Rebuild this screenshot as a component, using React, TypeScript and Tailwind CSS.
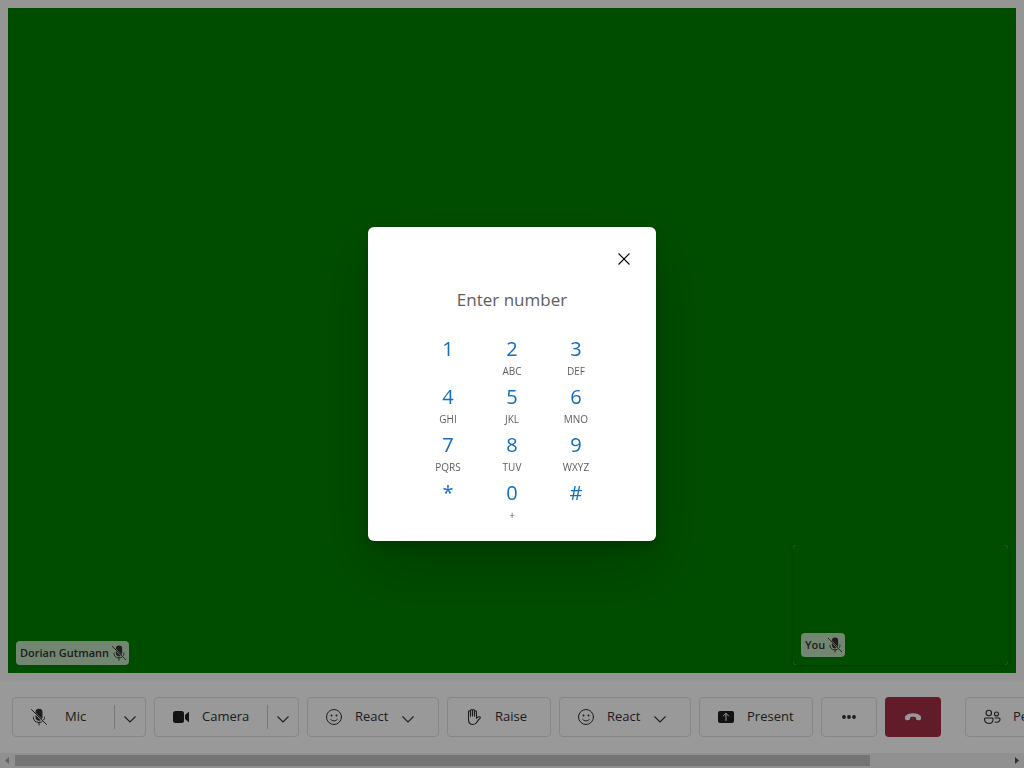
import type { ReactNode } from 'react';

function MicOffIcon({ className }: { className: string }) {
  return (
    <svg viewBox="0 0 20 20" className={className} aria-hidden="true">
      <path
        fill="currentColor"
        d="M6.500 5.400 13 11.900c.3-.5.500-1 .5-1.600V5.300a3.500 3.500 0 0 0-7-.2v.3ZM6.500 7.900v2.400a3.500 3.500 0 0 0 5.300 3L6.500 7.900Z"
      />
      <path
        fill="none"
        stroke="currentColor"
        strokeLinecap="round"
        d="M2.500 2.500l15 15M4.500 10v.5a4.500 4.500 0 0 0 4.500 4.800h2c.8 0 1.300-.2 1.900-.500M10 15.300v2.700M15.500 10v.5c0 .9-.2 1.500-.6 2.200"
      />
    </svg>
  );
}

function CameraIcon() {
  return (
    <svg viewBox="0 0 20 20" className="size-5 shrink-0 text-[#201f1e]" fill="currentColor" aria-hidden="true">
      <rect x="2" y="4" width="11" height="12" rx="2.5" />
      <path d="M14 7.900 17.200 5.200c.3-.3.800-.1.800.4v8.800c0 .5-.5.700-.8.4L14 12.100Z" />
    </svg>
  );
}

function SmileIcon() {
  return (
    <svg viewBox="0 0 20 20" className="size-5 shrink-0" fill="none" stroke="currentColor" strokeLinecap="round" aria-hidden="true">
      <circle cx="10" cy="10" r="7.500" />
      <path d="M6.700 12.400c1.800 2.100 4.800 2.100 6.600 0" />
      <circle cx="7.500" cy="8.500" r="1" fill="currentColor" stroke="none" />
      <circle cx="12.500" cy="8.500" r="1" fill="currentColor" stroke="none" />
    </svg>
  );
}

function HandIcon() {
  return (
    <svg viewBox="0 0 20 20" className="size-5 shrink-0" fill="none" stroke="currentColor" strokeWidth="1.100" strokeLinecap="round" strokeLinejoin="round" aria-hidden="true">
      <path d="M6.500 9V4.800a1 1 0 0 0-2 0v7.700c0 3 1.700 5 4.500 5 2 0 3.200-.9 4-2.500.7-1.300 1.500-2.400 2.700-3.400.6-.5.9-.9.6-1.400-.6-.8-2.300-.6-3.800 1V4.800a1 1 0 0 0-2 0V9" />
      <path d="M6.500 9V3.500a1 1 0 0 1 2 0V9M8.500 8.500v-5a1 1 0 0 1 2 0v5.300" />
    </svg>
  );
}

function PresentIcon() {
  return (
    <svg viewBox="0 0 20 20" className="size-5 shrink-0 text-[#201f1e]" aria-hidden="true">
      <rect x="2" y="4" width="16" height="12" rx="2" fill="currentColor" />
      <path d="M10 13.500v-7M7.300 9 10 6.300 12.700 9" fill="none" stroke="white" strokeLinecap="round" strokeLinejoin="round" />
    </svg>
  );
}

function PeopleIcon() {
  return (
    <svg viewBox="0 0 20 20" className="size-5 shrink-0" fill="none" stroke="currentColor" strokeWidth="1.100" strokeLinecap="round" aria-hidden="true">
      <circle cx="6.800" cy="6" r="2.700" />
      <circle cx="14.500" cy="7" r="2" />
      <path d="M3.500 11h6.600c.6 0 1 .5 1 1 0 2.500-1.600 4.500-4.300 4.500S2.500 14.500 2.500 12c0-.5.400-1 1-1Z" />
      <path d="M13 11h4c.600 0 1 .4 1 1 0 2-1.500 3.200-3.400 3.200-.5 0-1-.1-1.500-.2" />
    </svg>
  );
}

function HangUpIcon() {
  return (
    <svg viewBox="0 0 20 20" className="size-5" fill="currentColor" aria-hidden="true">
      <path d="M18 11.300l-.2.900c-.2.800-1 1.200-1.800 1.100l-1.700-.300c-.7-.1-1.200-.6-1.300-1.300l-.3-1.400c-1.700-.6-3.700-.6-5.400 0L7 11.700c-.1.700-.6 1.200-1.300 1.300l-1.700.300c-.8.100-1.500-.300-1.700-1.100l-.300-.900c-.3-1 .1-1.900.9-2.700 1.700-1.500 4.200-2.300 7.100-2.300s5.400.8 7.100 2.300c.8.800 1.200 1.700.9 2.700Z" />
    </svg>
  );
}

function MoreIcon() {
  return (
    <svg viewBox="0 0 20 20" className="size-5" fill="currentColor" aria-hidden="true">
      <circle cx="5" cy="10" r="1.900" />
      <circle cx="10" cy="10" r="1.900" />
      <circle cx="15" cy="10" r="1.900" />
    </svg>
  );
}

function Chevron() {
  return (
    <svg viewBox="0 0 12 12" className="mt-1 size-3 shrink-0" fill="none" stroke="currentColor" strokeWidth="1.100" aria-hidden="true">
      <path d="M.5 3.500 6 9 11.500 3.500" />
    </svg>
  );
}

const frame = 'flex h-10 shrink-0 items-center rounded border border-[#e1dfdd] bg-white';

function SplitButton({ icon, label, width, gap }: { icon: ReactNode; label: string; width: string; gap: string }) {
  return (
    <div className={`${frame} ${width}`}>
      <button className={`flex h-full flex-1 items-center pl-4 ${gap}`}>
        {icon}
        <span>{label}</span>
      </button>
      <span className="h-6 w-px bg-[#c8c6c4]" />
      <button aria-label={`${label} options`} className="flex h-full w-[30px] items-center justify-center">
        <Chevron />
      </button>
    </div>
  );
}

function BarButton({ icon, label, width, menu }: { icon: ReactNode; label: string; width: string; menu?: boolean }) {
  return (
    <button className={`${frame} ${width} gap-[11px] pl-4`}>
      {icon}
      <span>{label}</span>
      {menu && (
        <span className="mr-6 ml-auto">
          <Chevron />
        </span>
      )}
    </button>
  );
}

function NameTag({ name }: { name: string }) {
  return (
    <div className="flex h-6 items-center gap-px rounded bg-white/75 pr-px pl-1 text-[11px] font-semibold text-[#323130]">
      <span>{name}</span>
      <MicOffIcon className="size-[18px] shrink-0" />
    </div>
  );
}

const keys: [string, string][] = [
  ['1', ''],
  ['2', 'ABC'],
  ['3', 'DEF'],
  ['4', 'GHI'],
  ['5', 'JKL'],
  ['6', 'MNO'],
  ['7', 'PQRS'],
  ['8', 'TUV'],
  ['9', 'WXYZ'],
  ['*', ''],
  ['0', '+'],
  ['#', ''],
];

function Dialpad() {
  return (
    <div
      role="dialog"
      aria-label="Dialpad"
      className="flex w-72 flex-col rounded-md bg-white px-4 pt-4 pb-4 shadow-[0_25px_58px_rgba(0,0,0,0.22),0_5px_14px_rgba(0,0,0,0.18)]"
    >
      <button aria-label="Close" className="flex size-8 items-center justify-center self-end">
        <svg viewBox="0 0 12 12" className="size-3" fill="none" stroke="black" strokeWidth="1.100" aria-hidden="true">
          <path d="M.5.5l11 11M11.500.5l-11 11" />
        </svg>
      </button>
      <div className="h-12 w-48 self-center rounded-lg bg-[#f3f2f1]">
        <input
          type="tel"
          aria-label="Phone number"
          placeholder="Enter number"
          className="size-full rounded-md bg-white text-center text-[17px] text-[#605e5c] outline-none placeholder:text-[#605e5c]"
        />
      </div>
      <div className="mt-2.5 grid grid-cols-[repeat(3,64px)] justify-center">
        {keys.map(([digit, letters]) => (
          <button key={digit} className="flex h-12 flex-col items-center">
            <span className="h-8 text-xl leading-8 text-[#106ebe]">{digit}</span>
            <span className="text-[10px] leading-3 text-[#605e5c]">{letters}</span>
          </button>
        ))}
      </div>
    </div>
  );
}

export default function App() {
  return (
    <div className="flex h-screen flex-col overflow-hidden bg-[#faf9f8] font-['Open_Sans','Noto_Sans',sans-serif] text-[13px] text-[#323130]">
      <main className="flex min-h-0 flex-1 p-2">
        <section className="flex flex-1 items-end justify-between bg-[#008000] p-2">
          <NameTag name="Dorian Gutmann" />
          <div className="flex h-30 w-[215px] items-end rounded bg-white shadow-[0_1px_4px_rgba(0,0,0,0.2)]">
            <div className="flex size-full items-end rounded-sm bg-[#008000] p-2">
              <NameTag name="You" />
            </div>
          </div>
        </section>
      </main>

      <footer className="shrink-0 bg-white">
        <div className="flex gap-2 overflow-hidden px-3 py-4">
          <SplitButton icon={<MicOffIcon className="size-5 shrink-0" />} label="Mic" width="w-[134px]" gap="gap-4" />
          <SplitButton icon={<CameraIcon />} label="Camera" width="w-[145px]" gap="gap-[11px]" />
          <BarButton icon={<SmileIcon />} label="React" width="w-[132px]" menu />
          <BarButton icon={<HandIcon />} label="Raise" width="w-[104px]" />
          <BarButton icon={<SmileIcon />} label="React" width="w-[132px]" menu />
          <BarButton icon={<PresentIcon />} label="Present" width="w-[114px]" />
          <button aria-label="More" className={`${frame} w-14 justify-center`}>
            <MoreIcon />
          </button>
          <button aria-label="Leave" className="flex h-10 w-14 shrink-0 items-center justify-center rounded bg-[#a42e43] text-white">
            <HangUpIcon />
          </button>
          <div className="ml-4 flex shrink-0">
            <BarButton icon={<PeopleIcon />} label="People" width="w-[114px]" />
          </div>
        </div>
        <div className="flex h-[15px] items-center bg-[#f1f1f1]" aria-hidden="true">
          <svg viewBox="0 0 15 15" className="size-[15px] shrink-0 text-[#a3a3a3]" fill="currentColor">
            <path d="M9 4v7L5 7.500Z" />
          </svg>
          <div className="flex flex-1">
            <div className="h-[11px] w-[86%] bg-[#c1c1c1]" />
          </div>
          <svg viewBox="0 0 15 15" className="size-[15px] shrink-0 text-[#505050]" fill="currentColor">
            <path d="M6 4v7l4-3.500Z" />
          </svg>
        </div>
      </footer>

      <div className="fixed inset-0 flex items-center justify-center bg-black/40">
        <Dialpad />
      </div>
    </div>
  );
}
